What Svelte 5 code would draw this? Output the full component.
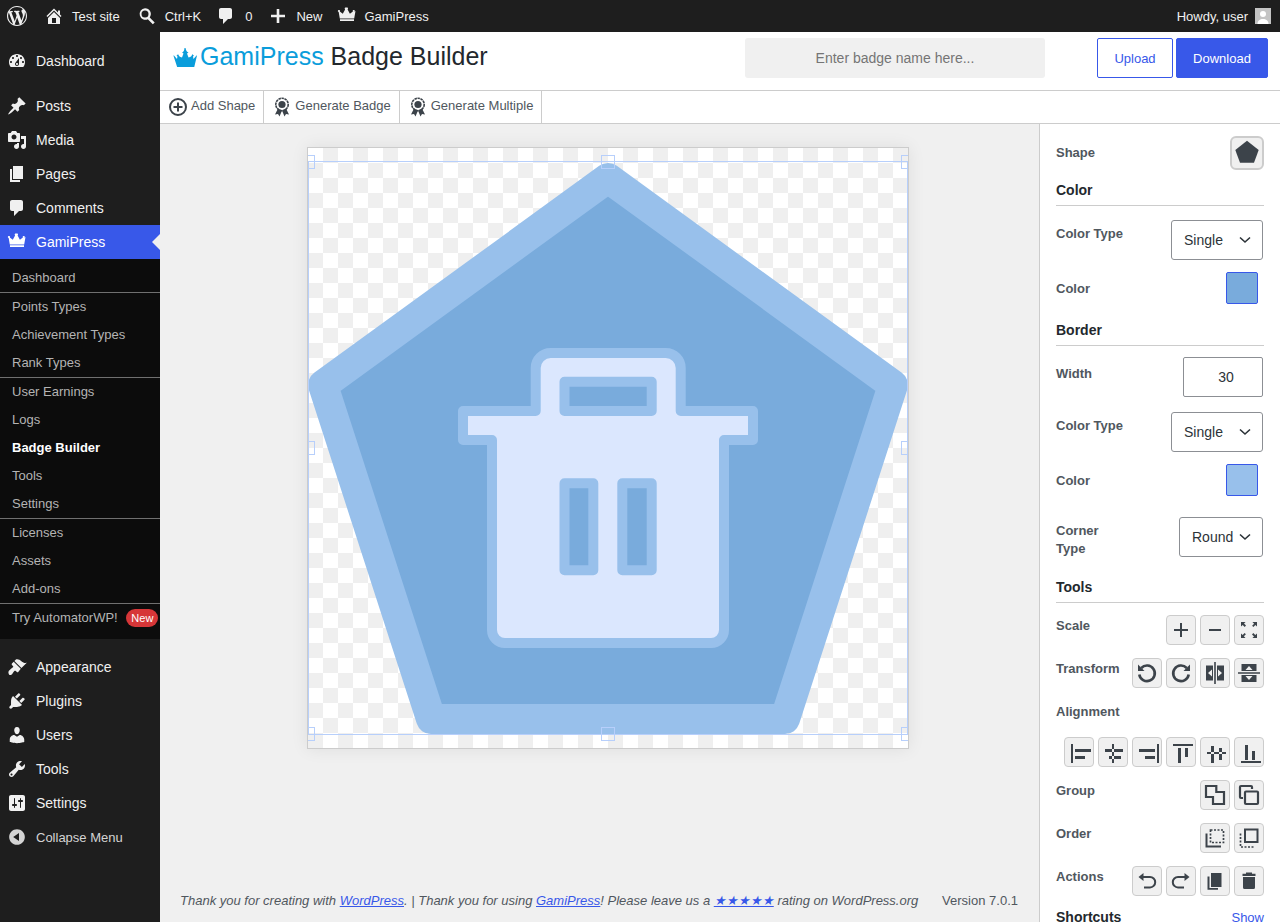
<script>
	const dash = {
		wp: "M20 10c0-5.52-4.48-10-10-10S0 4.48 0 10s4.48 10 10 10 10-4.48 10-10zM7.78 15.37L4.37 6.22c.55-.02 1.17-.08 1.17-.08.5-.06.44-1.13-.06-1.11 0 0-1.45.11-2.37.11-.18 0-.37 0-.58-.01C4.12 2.69 6.87 1.11 10 1.11c2.33 0 4.45.87 6.05 2.34-.68-.11-1.65.39-1.65 1.58 0 .74.45 1.36.9 2.1.35.61.55 1.36.55 2.46 0 1.49-1.4 5-1.4 5l-3.03-8.37c.54-.02.82-.17.82-.17.5-.05.44-1.25-.06-1.22 0 0-1.44.12-2.38.12-.87 0-2.33-.12-2.33-.12-.5-.03-.56 1.2-.06 1.22l.92.08 1.26 3.41zM17.41 10c.24-.64.74-1.87.43-4.25.7 1.29 1.05 2.71 1.05 4.25 0 3.29-1.73 6.24-4.4 7.78.97-2.59 1.94-5.2 2.92-7.78zM6.1 18.09C3.12 16.65 1.11 13.53 1.11 10c0-1.3.23-2.48.72-3.59C3.25 10.3 4.67 14.2 6.1 18.09zm4.03-6.63l2.58 6.98c-.86.29-1.76.45-2.71.45-.79 0-1.57-.11-2.29-.33.81-2.38 1.62-4.74 2.42-7.1z",
		home: "M16 8.5l1.53 1.53-1.06 1.06L10 4.62l-6.47 6.47-1.06-1.06L10 2.5l4 4v-2h2v4zm-6-2.46l6 5.99V18H4v-5.97zM12 17v-5H8v5h4z",
		search: "M8 2.2a5.8 5.8 0 0 1 4.7 9.2l5 5-1.9 1.9-5-5A5.8 5.8 0 1 1 8 2.2zm0 2.3a3.5 3.5 0 1 0 0 7 3.5 3.5 0 0 0 0-7z",
		comment: "M5 2h9c1.1 0 2 .9 2 2v7c0 1.1-.9 2-2 2h-2l-5 5v-5H5c-1.1 0-2-.9-2-2V4c0-1.1.9-2 2-2z",
		plus: "M8.7 3h2.6v5.7H17v2.6h-5.7V17H8.7v-5.7H3V8.7h5.7z",
		crown: "M10 1.6c.6 0 1 .4 1 1 0 .3-.2.6-.4.8l2.3 4.4 3-2.3c-.1-.2-.2-.4-.2-.6 0-.6.5-1 1-1 .6 0 1.1.4 1.1 1s-.5 1-1.1 1L18.500 5l-1.3 7.500H2.800L1.500 5l-.100.900c-.100 0 0 0 0 0C.9 5.900.9 5.400.9 4.900c0-.6.500-1 1.100-1s1 .4 1 1c0 .2-.1.4-.2.6l3 2.300 2.300-4.400c-.2-.2-.4-.5-.4-.8 0-.6.5-1 1-1z M3 13.200h14V15H3z",
		dashboard: "M3.76 16h12.48c1.1-1.37 1.76-3.11 1.76-5 0-4.42-3.58-8-8-8s-8 3.58-8 8c0 1.89.66 3.63 1.76 5zM10 4c.55 0 1 .45 1 1s-.45 1-1 1-1-.45-1-1 .45-1 1-1zM6 6c.55 0 1 .45 1 1s-.45 1-1 1-1-.45-1-1 .45-1 1-1zm8 0c.55 0 1 .45 1 1s-.45 1-1 1-1-.45-1-1 .45-1 1-1zm-5.37 5.55L12 7v6c0 1.1-.9 2-2 2s-2-.9-2-2c0-.57.24-1.08.63-1.45zM4 10c.55 0 1 .45 1 1s-.45 1-1 1-1-.45-1-1 .45-1 1-1zm12 0c.55 0 1 .45 1 1s-.45 1-1 1-1-.45-1-1 .45-1 1-1zm-5 3c0-.55-.45-1-1-1s-1 .45-1 1 .45 1 1 1 1-.45 1-1z",
		post: "M10.44 3.02l1.82-1.82 6.36 6.35-1.83 1.82c-1.05-.68-2.48-.57-3.41.36l-.75.75c-.92.93-1.04 2.35-.35 3.41l-1.83 1.82-2.41-2.41-2.8 2.79c-.42.42-3.38 2.71-3.8 2.29s1.86-3.39 2.28-3.81l2.79-2.79L4.1 9.36l1.83-1.82c1.05.69 2.48.57 3.4-.36l.75-.75c.93-.92 1.05-2.35.36-3.41z",
		media: "M13 11V4c0-.55-.45-1-1-1h-1.67L9 1H5L3.67 3H2c-.55 0-1 .45-1 1v7c0 .55.45 1 1 1h10c.55 0 1-.45 1-1zM7 4.500c1.380 0 2.500 1.120 2.500 2.500S8.380 9.500 7 9.500 4.500 8.380 4.500 7 5.620 4.500 7 4.500zM14 6h5v10.500c0 1.380-1.120 2.500-2.500 2.500S14 17.880 14 16.500s1.120-2.500 2.500-2.500c.17 0 .34.02.5.05V9h-3V6zm-4 8.050V13h2v3.500c0 1.380-1.120 2.500-2.500 2.500S7 17.880 7 16.500 8.120 14 9.500 14c.17 0 .34.02.5.05z",
		page: "M6 15V2h10v13H6zm-1 1h8v2H3V5h2v11z",
		appearance: "M14.48 11.06L7.41 3.99l1.5-1.5c.5-.56 2.3-.47 3.51.32 1.21.8 1.43 1.28 2.91 2.1 1.18.64 2.45 1.26 4.45.85zm-.71.71L6.7 4.7 4.93 6.47c-.39.39-.39 1.02 0 1.41l1.06 1.06c.39.39.39 1.03 0 1.42-.6.6-1.43 1.11-2.21 1.69-.35.26-.7.53-1.01.84C1.43 13.71.96 15.65 1.910 17.140c.28.44.8.960 1.250.96 1.230-.1 2.070-1.110 2.510-1.950.58-.78 1.090-1.610 1.690-2.210.39-.39 1.030-.39 1.420 0l1.060 1.060c.39.39 1.020.39 1.410 0z",
		plugin: "M13.11 4.36L9.87 7.6 8 5.73l3.24-3.24c.35-.34 1.05-.2 1.56.32.52.51.66 1.21.31 1.55zm-8 1.77l.91-1.12 9.01 9.01-1.19.84c-.71.71-2.63 1.16-3.82 1.16H6.14L4.9 17.26c-.59.59-1.54.59-2.12 0-.59-.58-.59-1.53 0-2.12l1.24-1.24v-3.88c0-1.13.4-3.19 1.09-3.89zm7.26 3.97l3.24-3.24c.34-.35 1.04-.21 1.55.31.52.51.66 1.21.31 1.55l-3.24 3.25z",
		users: "M10 9.25c-2.27 0-2.73-3.44-2.73-3.44C7 4.02 7.82 2 9.97 2c2.16 0 2.98 2.02 2.71 3.81 0 0-.41 3.44-2.68 3.44zm0 2.57L12.72 10c2.39 0 4.52 2.33 4.52 4.53v2.49s-3.65 1.13-7.24 1.13c-3.65 0-7.24-1.13-7.24-1.13v-2.49c0-2.25 1.94-4.48 4.47-4.48z",
		tools: "M16.68 9.77c-1.34 1.34-3.3 1.67-4.95.99l-5.41 6.52c-.99.99-2.59.99-3.58 0s-.99-2.59 0-3.57l6.52-5.42c-.68-1.65-.35-3.61.99-4.95 1.28-1.28 3.12-1.62 4.72-1.06l-2.89 2.89 2.82 2.82 2.86-2.87c.53 1.58.18 3.39-1.08 4.65zM3.81 16.21c.4.39 1.04.39 1.43 0 .4-.4.4-1.04 0-1.43-.39-.4-1.03-.4-1.43 0-.39.39-.39 1.03 0 1.43z",
		settings: "M18 16V4c0-1.100-.9-2-2-2H4c-1.100 0-2 .9-2 2v12c0 1.100.9 2 2 2h12c1.100 0 2-.9 2-2zM8 11h1c.55 0 1 .45 1 1s-.45 1-1 1H8v1.500c0 .28-.22.5-.5.5s-.5-.22-.5-.5V13H6c-.55 0-1-.45-1-1s.45-1 1-1h1V5.500c0-.28.22-.5.5-.5s.5.22.5.5V11zm5-2h-1c-.55 0-1-.45-1-1s.45-1 1-1h1V5.500c0-.28.22-.5.5-.5s.5.22.5.5V7h1c.55 0 1 .45 1 1s-.45 1-1 1h-1v5.500c0 .28-.22.5-.5.5s-.5-.22-.5-.5V9z",
		collapse: "M10 2.160c4.330 0 7.840 3.510 7.840 7.840s-3.510 7.840-7.840 7.840S2.160 14.330 2.160 10 5.710 2.160 10 2.160zm2 11.720V6.120L6.180 9.970z"
	};

	const topMenu = [{ icon: "dashboard", label: "Dashboard" }];
	const midMenu = [
		{ icon: "post", label: "Posts" },
		{ icon: "media", label: "Media" },
		{ icon: "page", label: "Pages" },
		{ icon: "comment", label: "Comments" }
	];
	const lowMenu = [
		{ icon: "appearance", label: "Appearance" },
		{ icon: "plugin", label: "Plugins" },
		{ icon: "users", label: "Users" },
		{ icon: "tools", label: "Tools" },
		{ icon: "settings", label: "Settings" }
	];
	const subGroups = [
		["Dashboard"],
		["Points Types", "Achievement Types", "Rank Types"],
		["User Earnings", "Logs", "Badge Builder", "Tools", "Settings"],
		["Licenses", "Assets", "Add-ons"]
	];

	// tool buttons: coordinates are the button's own pixels
	const tool = {
		plus: { s: "M8 15h14M15 8v14" },
		minus: { s: "M9 15h12" },
		expand: { f: "M7 7h4.600l-1.600 1.600 2 2-1.300 1.300-2-2L7 11.600zM23 7v4.600l-1.600-1.600-2 2-1.300-1.300 2-2L18.400 7zM7 23v-4.600l1.600 1.600 2-2 1.300 1.300-2 2 1.600 1.700zM23 23h-4.600l1.600-1.600-2-2 1.300-1.300 2 2 1.700-1.600z" },
		rotl: { s: "M9.300 10a7.800 7.800 0 1 1-2 6.500", f: "M6 6.500v6.500h6.500z", w: 2.600 },
		rotr: { s: "M20.700 10a7.800 7.800 0 1 0 2 6.500", f: "M24 6.500v6.500h-6.500z", w: 2.600 },
		fliph: { f: "M6 7.500h7v15H6zM8 15l4 3.500v-7zM17 7.500h7v15h-7zM22 15l-4-3.500v7zM14.200 4h1.600v22h-1.600z" },
		flipv: { f: "M7.500 6h15v7h-15zM15 8l-3.500 4h7zM7.500 17h15v7h-15zM15 22l3.500-4h-7zM4 14.200h22v1.600H4z" },
		al: { f: "M7 7h2v19H7zM11 12h16v3H11zM11 19h10v3H11z" },
		ac: { f: "M14 7h2v19h-2zM7 12h18v3H7zM11 19h12v3H11z" },
		ar: { f: "M25 7h2v19h-2zM7 12h16v3H7zM13 19h10v3H13z" },
		at: { f: "M7 7h20v2H7zM12 11h3v15h-3zM19 11h3v9h-3z" },
		am: { f: "M7 15h19v2H7zM11 9h3v17h-3zM19 11h3v12h-3z" },
		ab: { f: "M7 24h20v2H7zM11 8h3v15h-3zM18 14h3v9h-3z" },
		group: { s: "M6 6h10.300v6H24v12H13v-7H6z", w: 2.200 },
		ungroup: { s: "M18 9V7a1 1 0 0 0-1-1H7a1 1 0 0 0-1 1v10a1 1 0 0 0 1 1h2M12 11.500h11a1 1 0 0 1 1 1V23a1 1 0 0 1-1 1H12a1 1 0 0 1-1-1V12.500a1 1 0 0 1 1-1z", w: 2.200 },
		back: { s: "M6.500 10.500v13H21", d: "M10.500 7h13v12.500h-13z", w: 2 },
		front: { s: "M11 6.500h12.500V19H11z", d: "M6.500 10.500v13.500H20", w: 2 },
		undo: { s: "M10 11h8a5.200 5.200 0 0 1 0 10.400h-6", f: "M6.500 11l5-4v8z", w: 2 },
		redo: { s: "M20 11h-8a5.200 5.200 0 0 0 0 10.400h6", f: "M23.500 11l-5-4v8z", w: 2 },
		copy: { f: "M11 7h10.500v14H11zM7.500 10.500h2v11.500H18v1.700H7.500z" },
		trash: { f: "M12 6.500h6v1.200h3.500v2.300H8.500V7.700H12zM9 11h12v10.500a1.500 1.500 0 0 1-1.500 1.500h-9A1.500 1.500 0 0 1 9 21.500z" }
	};
</script>

{#snippet dashicon(name, size = 20)}
	<svg class="dash" width={size} height={size} viewBox="0 0 20 20"><path d={dash[name]} fill-rule="evenodd" fill="currentColor" /></svg>
{/snippet}

{#snippet award()}
	<svg width="16" height="20" viewBox="0 0 16 20">
		<path d="M4 11.500 1 17.500l3-.5 1.500 2.500 2.500-6zM12 11.500l3 6-3-.5-1.500 2.500-2.500-6z" fill="#3c434a" />
		<circle cx="8" cy="7.500" r="6.200" fill="none" stroke="#3c434a" stroke-width="1.600" stroke-dasharray="2.500 .6" />
		<circle cx="8" cy="7.500" r="3.600" fill="#3c434a" />
	</svg>
{/snippet}

{#snippet tbtn(name)}
	{@const t = tool[name]}
	<button class="tbtn" aria-label={name}>
		<svg width="28" height="28" viewBox="1 1 28 28">
			{#if t.s}<path d={t.s} fill="none" stroke="#3c434a" stroke-width={t.w ?? 2} />{/if}
			{#if t.d}<path d={t.d} fill="none" stroke="#3c434a" stroke-width="1.700" stroke-dasharray="2 1.500" />{/if}
			{#if t.f}<path d={t.f} fill="#3c434a" fill-rule="evenodd" />{/if}
		</svg>
	</button>
{/snippet}

{#snippet menuItem(item)}
	<a class="menu-item" href="#top">
		{@render dashicon(item.icon)}
		<span>{item.label}</span>
	</a>
{/snippet}

<div class="page">
	<header class="adminbar">
		<div class="ab-item logo">{@render dashicon("wp", 20)}</div>
		<div class="ab-item home">{@render dashicon("home")}<span>Test site</span></div>
		<div class="ab-item find">{@render dashicon("search")}<span>Ctrl+K</span></div>
		<div class="ab-item talk">{@render dashicon("comment")}<span>0</span></div>
		<div class="ab-item add">{@render dashicon("plus")}<span>New</span></div>
		<div class="ab-item crown">{@render dashicon("crown")}<span>GamiPress</span></div>
		<div class="howdy">
			<span>Howdy, user</span>
			<svg class="avatar" width="16" height="16" viewBox="0 0 16 16">
				<rect width="16" height="16" fill="#c4c4c4" />
				<circle cx="8" cy="6" r="3" fill="#fff" />
				<path d="M2.500 16c0-3.500 2.500-5 5.500-5s5.500 1.500 5.500 5z" fill="#fff" />
			</svg>
		</div>
	</header>

	<div class="body">
		<nav class="sidebar">
			<div class="menu-top">
				{#each topMenu as item}{@render menuItem(item)}{/each}
			</div>
			<div class="menu-group">
				{#each midMenu as item}{@render menuItem(item)}{/each}
				<a class="menu-item active" href="#top">
					{@render dashicon("crown")}
					<span>GamiPress</span>
				</a>
			</div>
			<div class="submenu">
				{#each subGroups as group}
					<div class="sub-group">
						{#each group as label}
							<a class="sub-item" class:current={label === "Badge Builder"} href="#top">{label}</a>
						{/each}
					</div>
				{/each}
				<div class="sub-group">
					<a class="sub-item" href="#top">Try AutomatorWP! <span class="badge">New</span></a>
				</div>
			</div>
			<div class="menu-group">
				{#each lowMenu as item}{@render menuItem(item)}{/each}
				<div class="menu-item collapse">
					{@render dashicon("collapse")}
					<span>Collapse Menu</span>
				</div>
			</div>
		</nav>

		<main class="builder">
			<div class="titlebar">
				<h1>
					<svg class="title-crown" width="25" height="19" viewBox="0 0 25 19">
						<path d="M12.500 0c.7 3 1.500 4 3 4.500l-1.500 1 1.500 4c2.500-.5 3.500-2 4-3.500.2.800.8 1.300 1.500 1.500l-1 1 .5 2.500 3-3.500.5.100-3 12.500H4.500L.4 7.500l.6-.1 3 3.500.5-2.500-1-1c.7-.2 1.300-.7 1.500-1.500.5 1.500 1.500 3 4 3.500l1.500-4-1.500-1c1.500-.5 2.300-1.500 2.500-4.400z M3.500 16h18v.1z" fill="#0a9ddb" />
					</svg>
					<span class="brand">GamiPress</span> Badge Builder
				</h1>
				<input class="name" type="text" placeholder="Enter badge name here..." />
				<button class="btn upload">Upload</button>
				<button class="btn download">Download</button>
			</div>

			<div class="toolbar">
				<div class="tool">
					<svg width="18" height="18" viewBox="0 0 18 18">
						<circle cx="9" cy="9" r="8" fill="none" stroke="#3c434a" stroke-width="2" />
						<path d="M9 4.500v9M4.500 9h9" stroke="#3c434a" stroke-width="2" />
					</svg>
					<span>Add Shape</span>
				</div>
				<div class="tool gen">{@render award()}<span>Generate Badge</span></div>
				<div class="tool gen">{@render award()}<span>Generate Multiple</span></div>
			</div>

			<div class="workspace">
				<section class="stage">
					<div class="canvas">
						<svg width="600" height="600" viewBox="308 142 600 600">
							<path d="M608 172 893 379 785 713H431L323 379Z" fill="#79abdc" stroke="#98c0eb" stroke-width="30" stroke-linejoin="round" />
							<path
								d="M463 405H535.700V362a15 15 0 0 1 15-15H665.700a15 15 0 0 1 15 15V405H753V434H724V624a13 13 0 0 1-13 13H505a13 13 0 0 1-13-13V434H463ZM564.500 375.700H651.700V405H564.500ZM564.500 477.300H593.300V564.300H564.500ZM622.300 477.300H651.700V564.300H622.300Z"
								fill="#dbe7fe"
								fill-rule="evenodd"
								stroke="#98c0eb"
								stroke-width="10"
								stroke-linejoin="round"
							/>
							<g fill="none" stroke="#b7cffb" stroke-width="1">
								<rect x="308.500" y="155.500" width="599" height="573" />
								{#each [308, 608, 908] as hx}
									{#each [156, 442, 728] as hy}
										{#if !(hx === 608 && hy === 442)}
											<rect x={hx - 6.500} y={hy - 6.500} width="13" height="13" />
										{/if}
									{/each}
								{/each}
							</g>
						</svg>
					</div>
					<footer class="foot">
						<em>Thank you for creating with <a href="#top">WordPress</a>. | Thank you for using <a href="#top">GamiPress</a>! Please leave us a <a href="#top">★★★★★</a> rating on WordPress.org</em>
						<span class="version">Version 7.0.1</span>
					</footer>
				</section>

				<aside class="panel">
					<div class="row shape-row">
						<span class="lbl">Shape</span>
						<button class="shape-btn" aria-label="Shape">
							<svg width="30" height="30" viewBox="2 2 30 30"><path d="M17 4.700 28.700 14 24 26.700H10L5.300 14Z" fill="#3c434a" /></svg>
						</button>
					</div>

					<h3 class="color-head">Color</h3>
					<div class="row select-row first">
						<span class="lbl">Color Type</span>
						<select><option>Single</option></select>
					</div>
					<div class="row swatch-row">
						<span class="lbl">Color</span>
						<span class="swatch fill"></span>
					</div>

					<h3 class="border-head">Border</h3>
					<div class="row width-row">
						<span class="lbl">Width</span>
						<input class="num" type="text" value="30" />
					</div>
					<div class="row select-row">
						<span class="lbl">Color Type</span>
						<select><option>Single</option></select>
					</div>
					<div class="row swatch-row">
						<span class="lbl">Color</span>
						<span class="swatch stroke"></span>
					</div>
					<div class="row select-row corner">
						<span class="lbl">Corner<br />Type</span>
						<select class="small"><option>Round</option></select>
					</div>

					<h3 class="tools-head">Tools</h3>
					<div class="row tool-row">
						<span class="lbl">Scale</span>
						<div class="btns">{@render tbtn("plus")}{@render tbtn("minus")}{@render tbtn("expand")}</div>
					</div>
					<div class="row tool-row">
						<span class="lbl">Transform</span>
						<div class="btns">{@render tbtn("rotl")}{@render tbtn("rotr")}{@render tbtn("fliph")}{@render tbtn("flipv")}</div>
					</div>
					<div class="row tool-row label-only"><span class="lbl">Alignment</span></div>
					<div class="btns align">{@render tbtn("al")}{@render tbtn("ac")}{@render tbtn("ar")}{@render tbtn("at")}{@render tbtn("am")}{@render tbtn("ab")}</div>
					<div class="row tool-row">
						<span class="lbl">Group</span>
						<div class="btns">{@render tbtn("group")}{@render tbtn("ungroup")}</div>
					</div>
					<div class="row tool-row">
						<span class="lbl">Order</span>
						<div class="btns">{@render tbtn("back")}{@render tbtn("front")}</div>
					</div>
					<div class="row tool-row">
						<span class="lbl">Actions</span>
						<div class="btns">{@render tbtn("undo")}{@render tbtn("redo")}{@render tbtn("copy")}{@render tbtn("trash")}</div>
					</div>
					<div class="row shortcuts">
						<strong>Shortcuts</strong>
						<a href="#top">Show</a>
					</div>
				</aside>
			</div>
		</main>
	</div>
</div>

<style>
	:global(body) {
		margin: 0;
		background: #f0f0f0;
	}

	.page {
		height: 922px;
		overflow: hidden;
		display: flex;
		flex-direction: column;
		font-family: "Liberation Sans", Arial, sans-serif;
		font-size: 13px;
		color: #3c434a;
	}

	.dash {
		display: block;
		flex: none;
	}

	/* admin bar */
	.adminbar {
		flex: none;
		height: 32px;
		background: #1e1e1e;
		color: #f0f0f0;
		display: flex;
		align-items: center;
		padding-left: 7px;
	}

	.ab-item {
		display: flex;
		align-items: center;
		gap: 8px;
	}

	.logo {
		margin-right: 17px;
	}

	.find {
		margin-left: 17px;
	}

	.talk {
		margin-left: 17px;
		gap: 9px;
	}

	.talk .dash {
		margin-left: -2px;
	}

	.add {
		margin-left: 16px;
	}

	.crown {
		margin-left: 15px;
		gap: 7px;
	}

	.howdy {
		margin-left: auto;
		margin-right: 9px;
		display: flex;
		align-items: center;
		gap: 7px;
	}

	.avatar {
		display: block;
	}

	/* sidebar */
	.body {
		flex: 1;
		display: flex;
		min-height: 0;
	}

	.sidebar {
		flex: none;
		width: 160px;
		background: #1e1e1e;
		color: #f0f0f0;
		font-size: 14px;
	}

	.menu-top {
		margin-top: 12px;
	}

	.menu-group {
		margin-top: 11px;
	}

	.menu-item {
		position: relative;
		height: 34px;
		display: flex;
		align-items: center;
		gap: 9px;
		padding-left: 7px;
		color: #f0f0f0;
		text-decoration: none;
	}

	.menu-item.active {
		background: #3858e9;
		color: #fff;
	}

	.menu-item.active::after {
		content: "";
		position: absolute;
		right: 0;
		top: 9px;
		border: 8px solid transparent;
		border-right-color: #f0f0f0;
		border-left: 0;
	}

	.collapse {
		font-size: 13px;
		color: #d4d4d4;
	}

	.submenu {
		background: #0c0c0c;
		padding: 5px 0 7px;
		overflow: hidden;
	}

	.sub-group + .sub-group {
		border-top: 1px solid #707070;
	}

	.sub-item {
		display: block;
		height: 28px;
		line-height: 28px;
		padding-left: 12px;
		color: #b4b4b4;
		text-decoration: none;
		font-size: 13px;
		white-space: nowrap;
	}

	.sub-item.current {
		color: #fff;
		font-weight: 700;
	}

	.badge {
		display: inline-block;
		height: 18px;
		line-height: 18px;
		margin-left: 5px;
		padding: 0 5px;
		border-radius: 9px;
		background: #d63638;
		color: #fff;
		font-size: 11px;
	}

	/* builder */
	.builder {
		flex: 1;
		min-width: 0;
		display: flex;
		flex-direction: column;
	}

	.titlebar {
		flex: none;
		height: 52px;
		background: #fff;
		border-bottom: 1px solid #ccc;
		display: flex;
		align-items: flex-start;
		padding: 6px 12px 0 13px;
		box-sizing: content-box;
	}

	h1 {
		margin: 5px 0 0;
		font-size: 25px;
		font-weight: 400;
		line-height: 26px;
		color: #23282d;
		display: flex;
		align-items: center;
		white-space: pre;
		width: 572px;
	}

	.title-crown {
		margin: 3px 2px 0 0;
	}

	.brand {
		color: #0a9ddb;
	}

	.name {
		width: 300px;
		height: 40px;
		box-sizing: border-box;
		border: 0;
		border-radius: 3px;
		background: #f0f0f0;
		font: 14px "Liberation Sans", Arial, sans-serif;
		text-align: center;
		color: #2c3338;
	}

	.name::placeholder {
		color: #757575;
	}

	.btn {
		height: 40px;
		box-sizing: border-box;
		border-radius: 2px;
		font: 13px "Liberation Sans", Arial, sans-serif;
		border: 1px solid #3858e9;
	}

	.upload {
		width: 76px;
		margin-left: 52px;
		background: #fff;
		color: #3858e9;
	}

	.download {
		width: 92px;
		margin-left: 3px;
		background: #3858e9;
		color: #fff;
	}

	.toolbar {
		flex: none;
		height: 32px;
		background: #fff;
		border-bottom: 1px solid #ccc;
		display: flex;
	}

	.tool {
		display: flex;
		align-items: center;
		gap: 4px;
		padding: 0 8px 0 9px;
		border-right: 1px solid #ccc;
		color: #50575e;
	}

	.tool span {
		margin-top: -4px;
	}

	.gen {
		padding-left: 10px;
		gap: 5px;
	}

	.workspace {
		flex: 1;
		min-height: 0;
		display: flex;
	}

	.stage {
		flex: 1;
		min-width: 0;
		display: flex;
		flex-direction: column;
		justify-content: space-between;
	}

	.canvas {
		width: 600px;
		height: 600px;
		margin: 23px 0 0 147px;
		border: 1px solid #ccc;
		box-shadow: 0 0 16px rgba(0, 0, 0, 0.08);
		background: repeating-conic-gradient(#efefef 0 25%, #fff 0 50%) 0 0 / 30px 30px;
	}

	.canvas svg {
		display: block;
		overflow: hidden;
	}

	.foot {
		display: flex;
		justify-content: space-between;
		padding: 0 21px 13px 20px;
		color: #50575e;
		line-height: 16px;
		white-space: nowrap;
	}

	.foot a {
		color: #3858e9;
	}

	/* right panel */
	.panel {
		flex: none;
		width: 241px;
		box-sizing: border-box;
		background: #fff;
		border-left: 1px solid #ccc;
		padding: 12px 16px 0;
		color: #50575e;
	}

	.row {
		display: flex;
		justify-content: space-between;
		align-items: flex-start;
	}

	.lbl {
		font-weight: 700;
		line-height: 18px;
		color: #50575e;
	}

	h3 {
		margin: 0;
		height: 23px;
		font-size: 14px;
		font-weight: 700;
		line-height: 16px;
		color: #23282d;
		border-bottom: 1px solid #ccc;
	}

	.shape-row {
		align-items: center;
	}

	.shape-btn {
		width: 34px;
		height: 34px;
		padding: 0;
		box-sizing: border-box;
		border: 2px solid #ccc;
		border-radius: 6px;
		background: #f0f0f0;
	}

	.shape-btn svg {
		display: block;
	}

	.color-head {
		margin-top: 12px;
	}

	.border-head {
		margin-top: 18px;
	}

	.tools-head {
		margin-top: 21px;
	}

	select {
		appearance: none;
		width: 92px;
		height: 40px;
		box-sizing: border-box;
		margin-right: 1px;
		padding: 0 12px;
		border: 1px solid #8c8f94;
		border-radius: 3px;
		font: 14px "Liberation Sans", Arial, sans-serif;
		color: #2c3338;
		background: #fff url("data:image/svg+xml,%3Csvg xmlns='http://www.w3.org/2000/svg' width='12' height='8' viewBox='0 0 12 8'%3E%3Cpath d='M1 1.500l5 4.500 5-4.500' fill='none' stroke='%232c3338' stroke-width='1.600'/%3E%3C/svg%3E") no-repeat right 11px center;
	}

	select.small {
		width: 84px;
	}

	.select-row {
		margin-top: 15px;
	}

	.select-row.first {
		margin-top: 14px;
	}

	.select-row .lbl {
		padding-top: 5px;
	}

	.select-row.corner {
		margin-top: 21px;
	}

	.swatch-row {
		margin-top: 12px;
	}

	.swatch-row .lbl {
		padding-top: 8px;
	}

	.swatch {
		width: 32px;
		height: 32px;
		box-sizing: border-box;
		margin-right: 6px;
		border: 1px solid #3858e9;
		border-radius: 2px;
	}

	.swatch.fill {
		background: #79abdc;
	}

	.swatch.stroke {
		background: #98c0eb;
	}

	.width-row {
		margin-top: 11px;
	}

	.width-row .lbl {
		padding-top: 8px;
	}

	.num {
		width: 80px;
		height: 40px;
		box-sizing: border-box;
		margin-right: 1px;
		padding-left: 8px;
		border: 1px solid #8c8f94;
		border-radius: 2px;
		font: 14px "Liberation Sans", Arial, sans-serif;
		color: #2c3338;
		text-align: center;
	}

	.tool-row {
		margin-top: 13px;
	}

	.tool-row .lbl {
		padding-top: 2px;
	}

	.select-row + .tool-row {
		margin-top: 12px;
	}

	h3 + .tool-row {
		margin-top: 12px;
	}

	.label-only {
		height: 30px;
	}

	.btns {
		display: flex;
		gap: 4px;
	}

	.btns.align {
		justify-content: flex-end;
		margin-top: 6px;
		gap: 4px;
	}

	.tbtn {
		width: 30px;
		height: 30px;
		padding: 0;
		box-sizing: border-box;
		border: 1px solid #ccc;
		border-radius: 4px;
		background: #f0f0f0;
	}

	.tbtn svg {
		display: block;
	}

	.shortcuts {
		margin-top: 11px;
		align-items: center;
		color: #23282d;
		font-size: 14px;
		line-height: 18px;
	}

	.shortcuts a {
		font-size: 13px;
		color: #3858e9;
		margin-top: 2px;
	}
</style>
